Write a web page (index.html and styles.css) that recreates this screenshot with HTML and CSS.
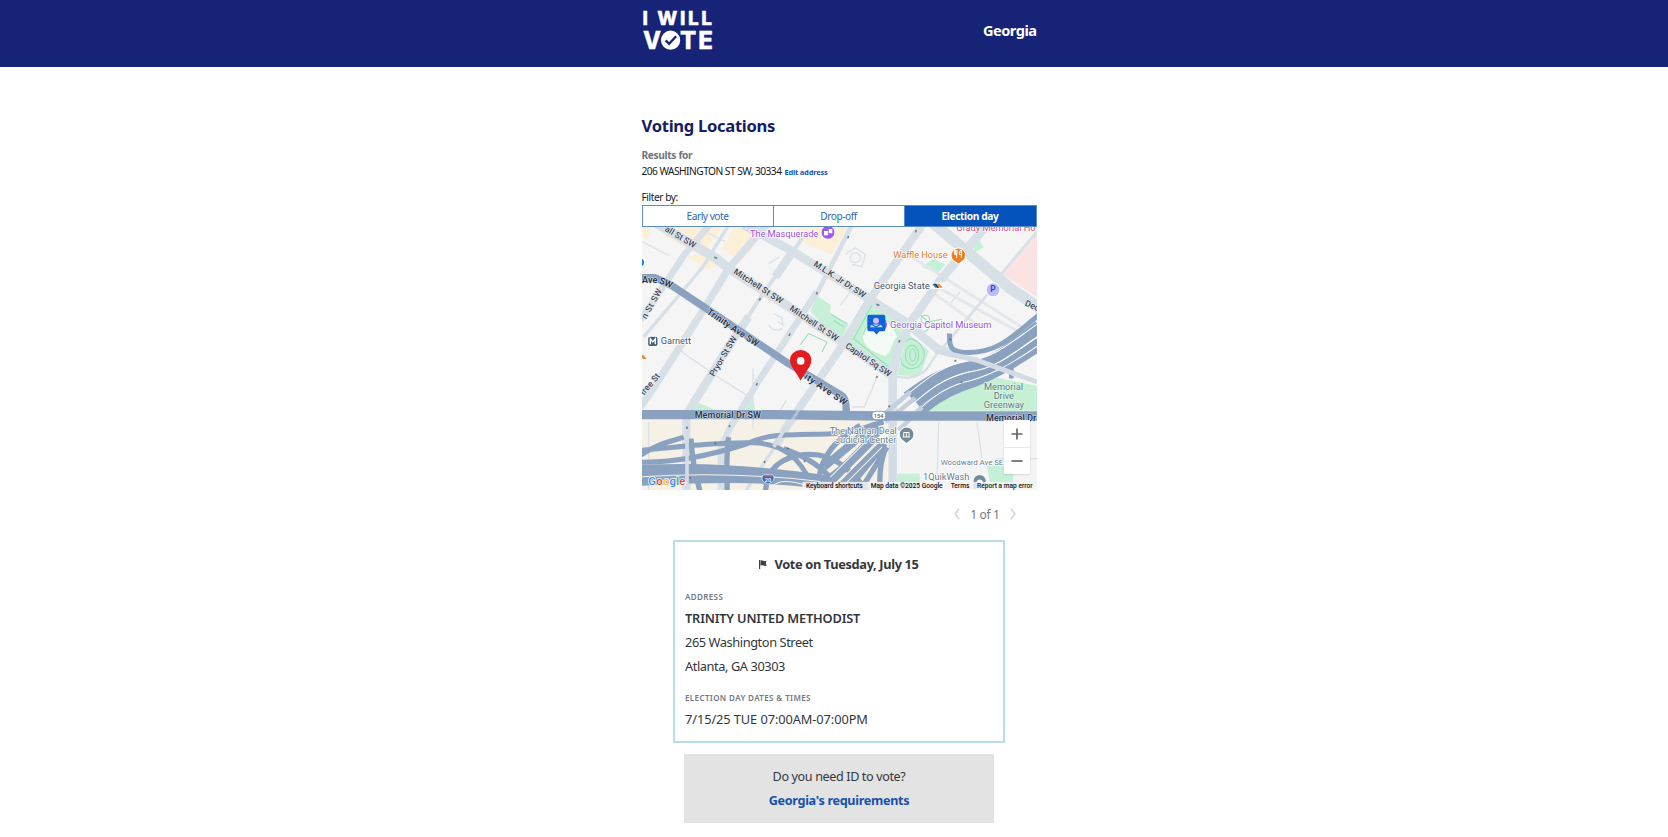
FILE: index.html
```html
<!DOCTYPE html>
<html lang="en">
<head>
<meta charset="utf-8">
<title>I Will Vote - Voting Locations</title>
<link rel="stylesheet" href="styles.css">
</head>
<body>
<header class="site-header">
  <div class="column header-row">
    <svg class="logo" viewBox="0 0 72 48" role="img" aria-label="I Will Vote">
      <g class="logo-text">
        <text class="logo-top" x="-.5" y="17.300" textLength="69.500" lengthAdjust="spacing">I WILL</text>
        <text class="logo-bottom" x="0" y="41" textLength="18" lengthAdjust="spacingAndGlyphs">V</text>
        <text class="logo-bottom" x="37" y="41" textLength="33" lengthAdjust="spacing">TE</text>
      </g>
      <circle cx="27.6" cy="32.2" r="9.6" fill="#fff"/>
      <path d="M22.6 32.4l3.5 3.5 7-7.6" fill="none" stroke="#162376" stroke-width="2.3"/>
    </svg>
    <span class="state">Georgia</span>
  </div>
</header>
<main class="column">
  <h1 class="title">Voting Locations</h1>
  <p class="results-label">Results for</p>
  <p class="address-line"><span class="query">206 WASHINGTON ST SW, 30334</span><a class="edit">Edit address</a></p>
  <p class="filter-label">Filter by:</p>
  <div class="tabs">
    <div class="tab">Early vote</div>
    <div class="tab">Drop-off</div>
    <div class="tab active">Election day</div>
  </div>
  <div class="map">
    <svg class="map-canvas" viewBox="5 6 1185 789" preserveAspectRatio="none">
      <rect x="0" y="0" width="1200" height="800" fill="#f5f5f6"/>
      <!-- blocks -->
      <g fill="#fcefd7">
        <path d="M110 0H250L185 95 60 25zM285 0H375L330 80 300 110 245 70zM180 85L250 115 205 135 140 95zM480 0H625L575 88 470 45zM0 0H35L20 45 0 30z"/>
      </g>
      <path d="M0 585H740V800H0z" fill="#f6f1e6"/>
      <path d="M780 585H1190V800H780z" fill="#f4f4f5"/>
      <g fill="#c5f0d6">
        <path d="M530 212L572 240 568 262 625 298 598 348 510 258z"/>
        <path d="M695 232L790 300 765 365 748 432 618 352z"/>
        <path d="M800 322L866 378 838 452 772 450z"/>
        <path d="M1000 58L1018 48 1030 66 1002 84zM880 100L915 118 892 145 845 125z"/>
        <path d="M850 556L1035 450 1190 482V556z"/>
        <path d="M165 528L230 556H160zM335 505L345 556H315zM765 745H838V800H765zM1040 720H1118V780H1050z"/>
      </g>
      <path d="M1192 22L1085 146 1192 218z" fill="#fce3e3"/>
      <path d="M690 285C720 262 760 300 770 335 750 350 760 375 735 392 700 385 660 360 668 320z" fill="#f4faf6"/>
      <g fill="none" stroke="#94dcb4" stroke-width="3">
        <path d="M695 240L640 340 745 425M810 340C850 350 855 385 850 400 835 440 800 435 785 415 775 390 785 350 810 340z"/>
        <ellipse cx="815" cy="390" rx="20" ry="30"/><ellipse cx="817" cy="389" rx="9" ry="18"/>
        <path d="M572 268L622 296M580 286L612 305M480 358L505 325 560 350 545 380M670 330C670 300 700 290 730 290M840 270L865 290 905 282"/>
        <circle cx="855" cy="283" r="13"/><path d="M830 310C850 340 880 300 865 290"/>
      </g>
      <!-- minor streets -->
      <g fill="none" stroke="#dce1e7" stroke-width="4">
        <path d="M5 50L88 92M385 115L418 95M400 265L425 278 428 300 412 288M385 300C400 320 420 318 425 308M615 88L645 68 675 88 665 125 635 118M600 240L630 200M710 455L672 545 635 545M120 375L150 398 240 460 320 510M338 430V610M418 557L438 525M895 590L890 780M1010 590L1025 700M25 590V795M1065 700H1190M195 20L255 50M960 200L930 235"/>
        <circle cx="645" cy="98" r="15"/>
      </g>
      <g fill="none" stroke="#e4e7eb" stroke-width="9">
        <path d="M790 80L1190 335M880 180L1190 350M860 190L1020 305"/>
      </g>
      <g fill="none" stroke="#d7dfe7" stroke-linejoin="round">
        <path stroke-width="20" d="M212 -5L135 85 75 175 0 285"/>
        <path stroke-width="10" d="M265 0L188 125 110 218 10 335"/>
        <path stroke-width="22" d="M378 0L265 130 195 245 45 480 0 545"/>
        <path stroke-width="12" d="M500 20L450 90 355 225 275 350"/>
        <path stroke-width="25" d="M450 90L405 155M325 275L280 340 138 568V800"/>
        <path stroke-width="14" d="M635 0L530 205"/>
        <path stroke-width="20" d="M530 200L445 330 345 482 268 610 242 665V800"/>
        <path stroke-width="24" d="M853 -10L690 220 600 370 440 602 405 665"/>
        <path stroke-width="10" d="M420 640L310 805"/>
        <path stroke-width="26" d="M1040 0L900 165 812 290 773 370 757 450V800"/>
        <path stroke-width="8" d="M1065 180L905 370M1190 20L1080 150"/>
        <path stroke-width="28" d="M25 -18L225 98 265 130 430 235 615 355 755 450"/>
        <path stroke-width="26" d="M310 0L450 75 685 220 800 293 890 370 940 385"/>
        <path stroke-width="34" d="M868 -15L1110 190 1200 250"/>
        <path stroke-width="7" d="M770 455C800 460 830 460 860 430L890 385"/>
      </g>
      <!-- freeway -->
      <g fill="none" stroke="#8aa2bf">
        <path stroke-width="15" d="M928 325C925 370 935 382 985 382 1080 380 1120 330 1195 270"/>
        <path stroke-width="16" d="M1190 295C1120 350 1070 400 990 416 900 430 840 475 795 508"/>
        <path stroke-width="25" d="M1195 315C1110 370 1060 420 980 428 900 445 850 490 815 520"/>
        <path stroke-width="26" d="M1195 350C1110 410 1060 440 985 455 900 480 860 510 830 535"/>
        <path stroke-width="26" d="M1195 366C1100 431 1030 465 960 487 900 510 865 540 835 565"/>
        <path stroke-width="14" d="M1113 460V420C1130 400 1160 385 1190 372"/>
      </g>
      <g fill="none" stroke="#fff" stroke-width="3">
        <path d="M1190 298C1110 352 1060 400 985 406 900 420 850 470 790 515M1192 334C1110 392 1060 432 985 440 900 460 855 505 800 550M1192 362C1100 425 1040 455 970 471 900 492 860 530 815 570"/>
      </g>
      <path fill="none" stroke="#d3dce5" stroke-width="15" d="M885 377L1010 405 1190 470"/>
      <g fill="none" stroke="#c5d0de" stroke-width="14">
        <path d="M810 500L715 580M825 518L735 590M845 545L775 615"/>
      </g>
      <g fill="none" stroke="#8aa2bf">
        <path stroke-width="22" stroke-linejoin="round" d="M0 158H45L95 182 195 248 440 412 600 508C612 515 618 525 618 565"/>
        <path stroke-width="28" d="M0 568H400L720 572H1192"/>
        <path stroke-width="15" d="M0 675C150 660 250 650 340 652 430 655 480 700 510 770M0 690C60 650 90 650 130 635M0 710C100 712 210 690 320 655 380 625 440 628 560 626 640 625 680 600 730 590"/>
        <path stroke-width="38" d="M0 738C180 728 350 740 560 768"/>
        <path stroke-width="26" d="M0 768C180 758 380 752 560 780"/>
        <path stroke-width="16" d="M152 640C155 700 165 750 180 800M265 635C255 700 262 750 260 800M375 800C380 720 430 695 490 688 570 680 620 720 680 795M430 670C490 690 560 730 580 775M535 770C540 690 590 640 660 600"/>
        <path stroke-width="24" d="M560 780L700 640M595 790L725 655M505 782C580 770 640 700 720 610M550 725L640 650 710 600"/>
        <path stroke-width="16" d="M660 795L740 665M720 795C715 730 725 700 735 670M620 795L735 655"/>
      </g>
      <g fill="none" stroke="#f5f1e8" stroke-width="3">
        <path d="M0 754C180 742 360 747 540 768M570 755L700 625M580 785L715 650M600 790L725 665M390 790C410 760 450 765 500 780"/>
      </g>
      <path fill="none" stroke="#d3dce5" stroke-width="11" d="M140 585V795M440 600L400 665"/>
      <path fill="none" stroke="#d3dce5" stroke-width="20" d="M757 586V795"/>
      <path fill="none" stroke="#d3dce5" stroke-width="8" opacity=".6" d="M505 505L440 610"/>
      <g stroke="#58677b" stroke-width="5" opacity=".8">
        <path d="M222 96l8 4M357 226l3-7M528 208l3-7M446 332l3-7M348 480l3-7M622 40l3-7M825 22l3-7M708 237l9 4M776 352l2-8M708 458l3-6M744 545l5-4M140 603v8M266 605l3-6M371 712l3-6M961 472l6-3M942 408l6-3M147 757h5M222 654h6M440 668l5 3M490 706l5 3M930 340v6"/>
      </g>
      <!-- street names -->
      <g class="street">
        <text transform="translate(72 17) rotate(31)" textLength="103">all St SW</text>
        <text transform="translate(278 144) rotate(33)" textLength="170">Mitchell St SW</text>
        <text transform="translate(446 254) rotate(34)" textLength="170">Mitchell St SW</text>
        <text transform="translate(518 121) rotate(33)" textLength="180">M.L.K. Jr Dr SW</text>
        <text transform="translate(613 366) rotate(34)" textLength="160">Capitol Sq SW</text>
        <text transform="translate(18 283) rotate(-61)" textLength="98">n St SW</text>
        <text transform="translate(221 455) rotate(-59)" textLength="135">Pryor St SW</text>
        <text transform="translate(10 511) rotate(-49)" textLength="77">tree St</text>
        <text transform="translate(1152 240) rotate(25)">Dec</text>
      </g>
      <g class="street strong">
        <text x="5" y="175" textLength="46">Ave</text>
        <text transform="translate(55 174) rotate(22)">SW</text>
        <text transform="translate(198 264) rotate(34)" textLength="181">Trinity Ave SW</text>
        <text transform="translate(490 458) rotate(34)" textLength="148">ity Ave SW</text>
        <text x="163" y="578" textLength="199">Memorial Dr SW</text>
        <text x="1037" y="586" textLength="151">Memorial Dr</text>
      </g>
      <!-- places -->
      <g class="place">
        <text class="purple" x="329" y="35" textLength="205">The Masquerade</text>
        <text class="orange" x="759" y="100" textLength="163">Waffle House</text>
        <text class="slate" x="700" y="192" textLength="168">Georgia State</text>
        <text class="purple" x="749" y="308" textLength="304">Georgia Capitol Museum</text>
        <text class="slate" x="61" y="357" textLength="91">Garnett</text>
        <text class="rose" x="948" y="18" textLength="238">Grady Memorial Ho</text>
        <text class="sage" x="1031" y="494" textLength="117">Memorial</text>
        <text class="sage" x="1060" y="522" textLength="61">Drive</text>
        <text class="sage" x="1030" y="549" textLength="121">Greenway</text>
        <text class="gray" x="568" y="627" textLength="201">The Nathan Deal</text>
        <text class="gray" x="584" y="653" textLength="184">Judicial Center</text>
        <text class="gray" x="848" y="765" textLength="139">1QuikWash</text>
        <text class="gray small" x="901" y="719" textLength="188">Woodward Ave SE</text>
      </g>
      <!-- place icons -->
      <g stroke="#fff" stroke-width="3">
        <circle cx="563" cy="22" r="21" fill="#a259e6"/>
        <path d="M938 106A22 22 0 1 1 970 106L954 117z" fill="#ee7f22"/>
        <circle cx="1058" cy="194" r="21" fill="#b9bcf8"/>
        <path d="M783 642A22 22 0 1 1 815 642L798 655z" fill="#738a99"/>
        <path d="M998 795V767A20 20 0 1 1 1038 767V775L1030 780z" fill="#738a99"/>
        <circle cx="0" cy="112" r="13" fill="#1a82e8"/>
        <rect x="22" y="333" width="31" height="31" rx="7" fill="#47607a"/>
      </g>
      <circle cx="1018" cy="771" r="9" fill="#fff"/>
      <path d="M551 18h12v13h-12zM565 12h11v13h-11z" fill="#fff"/>
      <path d="M946 74v10q0 4 3 4v11M942 74v10q0 4 4 4M950 74v13M963 99V75q-6 2-6 13h6" fill="none" stroke="#fff" stroke-width="3"/>
      <text x="1058" y="202" text-anchor="middle" class="parking">P</text>
      <path d="M30 357V341l7.500 9 7.500-9v16" fill="none" stroke="#fff" stroke-width="4"/>
      <path d="M787 635h22M789 621h18M790 623v10M798 623v10M806 623v10" stroke="#fff" stroke-width="3"/>
      <rect x="871" y="172" width="40" height="20" fill="#fff" rx="4"/>
      <path d="M875 176h10l9 12h-9z" fill="#1d8fc4"/><path d="M881 176h7l9 12h-6z" fill="#243b53"/><path d="M887 176h9l12 12h-10z" fill="#ee8a2c"/>
      <path d="M0 390h10l9 11h-11z" fill="#ee8a2c"/>
      <!-- capitol marker -->
      <circle cx="722" cy="298" r="18" fill="#a259e6"/>
      <path d="M687 269H729Q735 269 735 275V312Q735 318 729 318H717L709 328 699 318H687Q681 318 681 312V275Q681 269 687 269z" fill="#0d63dc"/>
      <circle cx="707" cy="287" r="9" fill="#d9b8fa"/><path d="M689 306Q692 295 707 298 722 295 727 306z" fill="#c4d4fc"/><path d="M695 298l12 7 12-7" fill="none" stroke="#0d63dc" stroke-width="3"/>
      <!-- result pin -->
      <path d="M481 466C477 440 449 430 449 405A32 31 0 0 1 513 405C513 430 487 440 481 466z" fill="#e11d22"/>
      <path d="M453 421L481 466 509 421z" fill="#e11d22"/>
      <circle cx="481" cy="407" r="11.500" fill="#fff"/>
      <!-- route shields -->
      <rect x="695" y="558" width="41" height="25" rx="12" fill="#fff" stroke="#66788d" stroke-width="2"/>
      <text class="shield" x="715" y="577" text-anchor="middle">154</text>
      <path d="M367 750Q376 744 383 748 390 744 399 750 408 766 383 776 358 766 367 750z" fill="#3f68b5" stroke="#fff" stroke-width="2"/>
      <path d="M370 751h26" stroke="#df6670" stroke-width="4"/>
      <text class="shield white" x="383" y="769" text-anchor="middle">20</text>
      <!-- attribution -->
      <rect x="486" y="769" width="704" height="27" fill="#f5f5f5" opacity=".82"/>
      <g class="attribution">
        <text x="497" y="789" textLength="170">Keyboard shortcuts</text>
        <text x="691" y="789" textLength="216">Map data ©2025 Google</text>
        <text x="931" y="789" textLength="56">Terms</text>
        <text x="1010" y="789" textLength="167">Report a map error</text>
      </g>
      <path d="M683 776v18" stroke="#ddd" stroke-width="3"/>
      <text class="google" x="24" y="779" textLength="111"><tspan fill="#4285f4">G</tspan><tspan fill="#ea4335">o</tspan><tspan fill="#fbbc05">o</tspan><tspan fill="#4285f4">g</tspan><tspan fill="#34a853">l</tspan><tspan fill="#ea4335">e</tspan></text>
    </svg>
    <div class="zoom">
      <button class="zoom-button" aria-label="Zoom in"><svg viewBox="0 0 12 12"><path d="M6 .5v11M.5 6h11"/></svg></button>
      <button class="zoom-button" aria-label="Zoom out"><svg viewBox="0 0 12 12"><path d="M.5 6h11"/></svg></button>
    </div>
  </div>
  <div class="pager">
    <svg class="chevron" viewBox="0 0 6 12"><path d="M5 .8L1.200 6 5 11.200"/></svg>
    <span class="count">1 of 1</span>
    <svg class="chevron" viewBox="0 0 6 12"><path d="M1 .8L4.800 6 1 11.200"/></svg>
  </div>
  <section class="card">
    <h2 class="card-title"><svg class="flag" viewBox="0 0 8 9"><path d="M0 0h1.200v9H0zM1.600 .6Q3 0 4.200 .8T7.600 .7L6.800 3 7.600 5.600Q5.800 6.300 4.400 5.600T1.600 5.600z"/></svg><span class="heading">Vote on Tuesday, July 15</span></h2>
    <p class="label label-address">ADDRESS</p>
    <p class="line name">TRINITY UNITED METHODIST</p>
    <p class="line street-line">265 Washington Street</p>
    <p class="line city">Atlanta, GA 30303</p>
    <p class="label label-dates">ELECTION DAY DATES &amp; TIMES</p>
    <p class="line dates">7/15/25 TUE 07:00AM-07:00PM</p>
  </section>
  <section class="id-box">
    <p class="question">Do you need ID to vote?</p>
    <a class="requirements">Georgia's requirements</a>
  </section>
</main>
</body>
</html>
```
FILE: styles.css
```css
* { box-sizing: border-box; }
body {
  margin: 0;
  background: #fff;
  color: #33373c;
  font-family: "Noto Sans", "Open Sans", sans-serif;
  overflow: hidden;
}
p, h1, h2 { margin: 0; }
a { text-decoration: none; }
.column { width: 395px; margin-left: 641.5px; }

.site-header { height: 66.500px; background: #162376; }
.header-row { display: flex; justify-content: space-between; align-items: flex-start; }
.logo { width: 72px; height: 48px; margin: 8px 0 0 1px; overflow: visible; }
.logo-text { fill: #fff; stroke: #fff; stroke-width: .4px; font-family: Inter, sans-serif; font-weight: 800; }
.logo-top { font-size: 19px; }
.logo-bottom { font-size: 24px; }
.state { margin-top: 18.500px; color: #fff; font-size: 14.600px; letter-spacing: -.5px; font-weight: 700; line-height: 22px; }

.title { margin-top: 47px; font-size: 16.600px; letter-spacing: -.3px; line-height: 24px; color: #151c62; }
.results-label { margin-top: 9px; font-size: 10.200px; letter-spacing: -.35px; line-height: 16px; font-weight: 700; color: #6f757f; }
.address-line { display: flex; align-items: baseline; gap: 3px; line-height: 16px; font-size: 10.200px; color: #16181b; }
.query { letter-spacing: -.53px; }
.edit { color: #1659b3; font-size: 7.500px; letter-spacing: -.2px; font-weight: 700; }
.filter-label { margin-top: 9px; font-size: 10.200px; letter-spacing: -.45px; line-height: 16px; color: #16181b; }

.tabs { display: grid; grid-template-columns: repeat(3, 1fr); height: 22px; border: 1px solid #5d8bc6; }
.tab { display: flex; align-items: center; justify-content: center; color: #2e67b1; font-size: 10.200px; letter-spacing: -.5px; border-right: 1px solid #5d8bc6; }
.tab.active { background: #0453bd; color: #fff; font-weight: 700; letter-spacing: -.38px; border: 0; }

.map { position: relative; height: 263.500px; }
.map-canvas { display: block; width: 395px; height: 263.500px; font-family: Roboto, sans-serif; }
.street { font-size: 26px; fill: #3a4450; stroke: #eef2f6; stroke-width: 3px; paint-order: stroke; font-weight: 500; }
.street.strong { font-size: 27px; fill: #263347; stroke: #d4deea; font-weight: 600; }
.place { font-size: 28px; font-weight: 400; stroke: #fff; stroke-width: 4px; paint-order: stroke; }
.purple { fill: #9a50da; }
.orange { fill: #e37a25; }
.slate { fill: #45556a; }
.rose { fill: #cf4a7c; }
.sage { fill: #5f7d88; stroke: #daf6e5; }
.gray { fill: #667c8e; }
.small { font-size: 24px; }
.parking { font-size: 25px; font-weight: 700; fill: #3547cf; }
.shield { font-size: 17px; font-weight: 500; fill: #52606f; }
.white { fill: #fff; }
.attribution { font-size: 20px; font-weight: 500; fill: #111; }
.google { font-size: 34px; font-weight: 500; stroke: #fff; stroke-width: 4px; paint-order: stroke; }
.zoom { position: absolute; right: 7px; bottom: 16px; width: 26px; height: 54px; background: #fff; box-shadow: 0 1px 2px rgba(0, 0, 0, .12); }
.zoom-button { display: flex; align-items: center; justify-content: center; width: 26px; height: 27px; padding: 0; border: 0; background: none; }
.zoom-button + .zoom-button { border-top: 1px solid #e9e9e9; }
.zoom-button svg { width: 12px; height: 12px; fill: none; stroke: #666; stroke-width: 1.700; }

.pager { display: flex; align-items: center; justify-content: flex-end; gap: 10.500px; height: 20px; margin: 14px 20.500px 0 0; color: #73777c; font-size: 12px; letter-spacing: -.35px; }
.chevron { width: 6px; height: 12px; fill: none; stroke: #d5d5d5; stroke-width: 1.600; }

.card { width: 332px; height: 203px; margin: 16px 0 0 31.500px; padding: 12px 10px 0; border: 2px solid #b9dced; }
.card-title { display: flex; align-items: center; justify-content: center; gap: 7px; height: 20px; font-size: 12.800px; letter-spacing: -.35px; line-height: 20px; }
.flag { width: 8px; height: 9px; fill: #3c4045; }
.label { font-size: 8px; line-height: 12px; letter-spacing: .38px; font-weight: 600; color: #727983; }
.label-address { margin-top: 17px; }
.label-dates { margin-top: 14px; }
.line { font-size: 12.800px; line-height: 24px; letter-spacing: -.42px; }
.name { margin-top: 3px; font-weight: 600; letter-spacing: -.18px; }
.dates { margin-top: 3px; letter-spacing: -.08px; }

.id-box { width: 310px; height: 69px; margin: 10.500px 0 0 42.500px; padding-top: 11px; background: #e3e3e3; text-align: center; font-size: 12.600px; line-height: 24px; }
.question { letter-spacing: -.38px; }
.requirements { color: #1650ab; font-weight: 700; letter-spacing: -.3px; }
```
